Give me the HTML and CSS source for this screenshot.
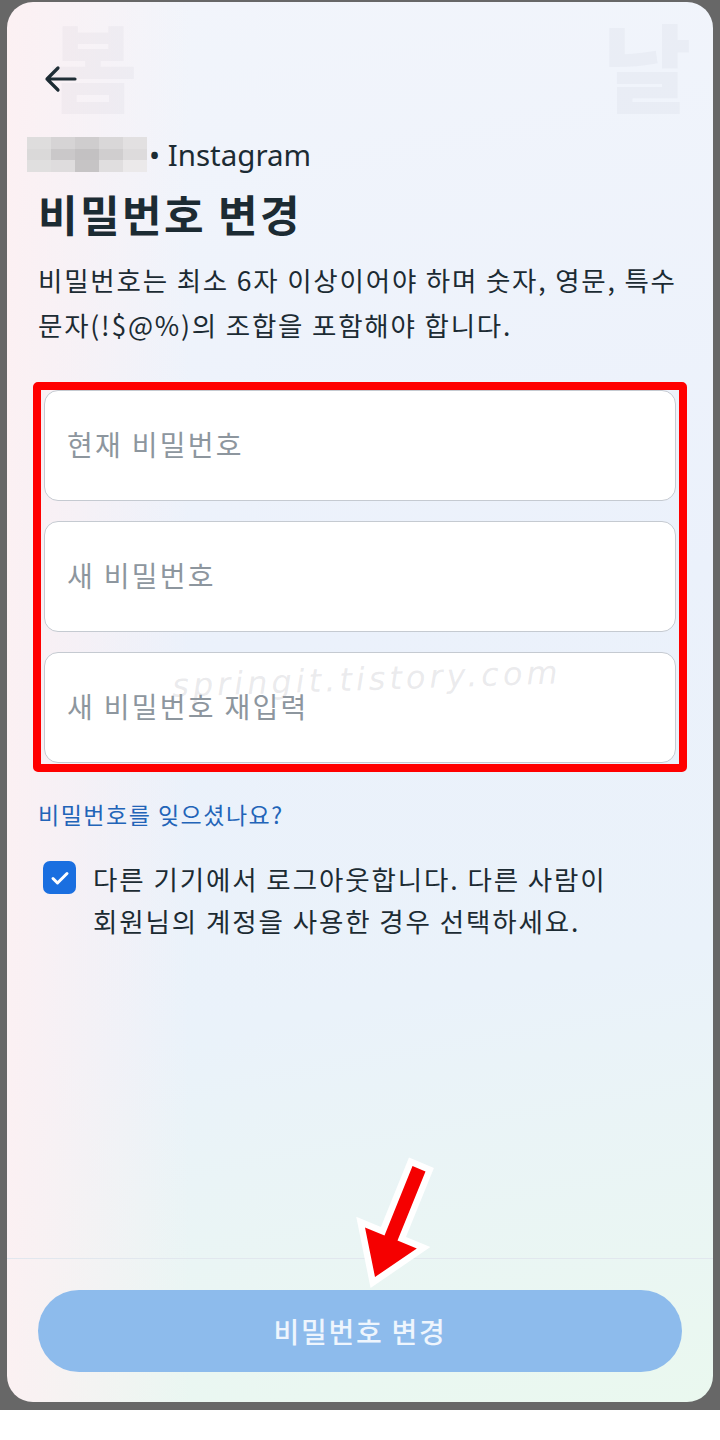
FILE: index.html
```html
<!DOCTYPE html>
<html>
<head>
    <title>비밀번호 변경</title>
    <link rel="stylesheet" href="styles.css">
</head>
<body>
    <div class="frame">
        <div class="screen">
            <div class="content">
                <button class="back" aria-label="뒤로">
                    <svg width="34" height="28" viewBox="0 0 34 28">
                        <path d="M32 14H4M15 3L4 14l11 11" fill="none" stroke="#1c2b33" stroke-width="3.2" stroke-linecap="round" stroke-linejoin="round"/>
                    </svg>
                </button>

                <div class="account">
                    <div class="blur">
                        <i style="background:#dedddd"></i><i style="background:#d6d4d5"></i><i style="background:#cfcdce"></i><i style="background:#d9d7d8"></i><i style="background:#e2e0e1"></i>
                        <i style="background:#dad9d9"></i><i style="background:#cac8c9"></i><i style="background:#c3c1c2"></i><i style="background:#d0cecf"></i><i style="background:#dddbdc"></i>
                        <i style="background:#e0dfdf"></i><i style="background:#dedcdd"></i><i style="background:#c6c4c5"></i><i style="background:#e0dedf"></i><i style="background:#ebe9ea"></i>
                    </div>
                    <span class="app">• Instagram</span>
                </div>

                <h1 class="title">비밀번호 변경</h1>
                <p class="desc">비밀번호는 최소 6자 이상이어야 하며 숫자, 영문, 특수<br>문자(!$@%)의 조합을 포함해야 합니다.</p>

                <div class="fields">
                    <input class="field" type="password" placeholder="현재 비밀번호">
                    <input class="field" type="password" placeholder="새 비밀번호">
                    <input class="field" type="password" placeholder="새 비밀번호 재입력">
                </div>

                <a class="forgot" href="#">비밀번호를 잊으셨나요?</a>

                <label class="logout">
                    <span class="checkbox">
                        <svg width="20" height="16" viewBox="0 0 20 16">
                            <path d="M3 8.5l4.5 4.5L17 3.5" fill="none" stroke="#fff" stroke-width="3" stroke-linecap="round" stroke-linejoin="round"/>
                        </svg>
                    </span>
                    <span class="logout-text">다른 기기에서 로그아웃합니다. 다른 사람이<br>회원님의 계정을 사용한 경우 선택하세요.</span>
                </label>
            </div>

            <div class="footer">
                <button class="submit">비밀번호 변경</button>
            </div>

            <!-- faint background watermarks -->
            <div class="ghost ghost-left">봄</div>
            <div class="ghost ghost-right">날</div>
            <div class="watermark">springit.tistory.com</div>
        </div>
    </div>

    <!-- annotation arrow -->
    <svg class="arrow" width="120" height="160" viewBox="340 1140 120 160">
        <polygon points="412.5,1166 425.5,1171.5 397.5,1240.5 416.8,1248.5 375,1277 365,1227.5 384.5,1235.5"
                 fill="#fff" stroke="#fff" stroke-width="13" stroke-linejoin="miter"/>
        <polygon points="412.5,1166 425.5,1171.5 397.5,1240.5 416.8,1248.5 375,1277 365,1227.5 384.5,1235.5"
                 fill="#f50000"/>
    </svg>
</body>
</html>
```

FILE: styles.css
```css
body {
    margin: 0;
    background: #fff;
    font-family: "Noto Sans CJK KR", "Noto Sans", sans-serif;
    color: #1c2b33;
    position: relative;
    height: 1440px;
    overflow: hidden;
}

.frame {
    background: #676767;
    padding: 2px 7px 8px;
}

.screen {
    position: relative;
    height: 1400px;
    border-radius: 26px;
    overflow: hidden;
    display: flex;
    flex-direction: column;
    background:
        linear-gradient(90deg, rgba(253, 240, 242, 0.9) 0%, rgba(253, 240, 242, 0) 26%),
        linear-gradient(170deg, #f2f5fb 0%, #ebf1fb 45%, #eaf2fa 70%, #eaf8ef 100%);
}

.ghost {
    position: absolute;
    top: 2px;
    font-size: 96px;
    font-weight: 900;
    line-height: 1.25;
    color: rgba(120, 120, 140, 0.05);
    pointer-events: none;
}

.ghost-left {
    left: 42px;
}

.ghost-right {
    right: 22px;
}

.content {
    flex: 1;
    padding: 0 31px;
}

.back {
    display: block;
    margin: 58px 0 0 2px;
    padding: 0;
    height: 40px;
    width: 40px;
    border: none;
    background: none;
}

.account {
    display: flex;
    align-items: center;
    height: 35px;
    margin: 37px 0 0 -11px;
}

.blur {
    display: grid;
    grid-template-columns: repeat(5, 24px);
    grid-template-rows: repeat(3, 11.7px);
    width: 120px;
}

.blur i {
    display: block;
}

.app {
    font-family: "Noto Sans", sans-serif;
    font-size: 29.5px;
    margin-left: 2px;
    color: #1c2b33;
}

.title {
    margin: 13px 0 0;
    font-size: 43px;
    line-height: 56px;
    font-weight: 700;
    letter-spacing: 2.4px;
}

.desc {
    margin: 16px 0 0;
    font-size: 26.5px;
    line-height: 45px;
    letter-spacing: 1.8px;
}

.fields {
    margin: 35px -5px 0 -5px;
    border: 8px solid #ff0000;
    border-radius: 5px;
    padding: 0 3px;
    display: flex;
    flex-direction: column;
    gap: 20px;
    box-sizing: border-box;
    height: 390px;
}

.field {
    height: 111px;
    box-sizing: border-box;
    border: 1.5px solid #c5cad1;
    border-radius: 14px;
    background: #fff;
    padding: 0 22px 4px;
    font-family: inherit;
    font-size: 28px;
    letter-spacing: 2.3px;
    color: #1c2b33;
    outline: none;
}

.field::placeholder {
    color: #8d969e;
}

.forgot {
    display: block;
    margin-top: 27px;
    font-size: 23px;
    line-height: 30px;
    color: #2264b8;
    text-decoration: none;
    letter-spacing: 1.5px;
}

.logout {
    display: flex;
    align-items: flex-start;
    gap: 17px;
    margin: 29px 0 0 5px;
}

.checkbox {
    flex: none;
    width: 33px;
    height: 33px;
    margin-top: 3px;
    border-radius: 7px;
    background: #1a6fe0;
    display: flex;
    align-items: center;
    justify-content: center;
}

.logout-text {
    font-size: 26.5px;
    line-height: 42px;
    letter-spacing: 1.9px;
}

.footer {
    border-top: 1px solid #e1e7ee;
    padding: 31px 31px 30px;
}

.submit {
    display: block;
    width: 100%;
    height: 82px;
    border: none;
    border-radius: 41px;
    background: #8dbbec;
    color: #eef5fd;
    font-family: inherit;
    font-size: 28px;
    font-weight: 500;
    letter-spacing: 1.7px;
}

.watermark {
    position: absolute;
    left: 165px;
    top: 658px;
    font-family: "DejaVu Sans", sans-serif;
    font-style: italic;
    font-weight: 300;
    font-size: 32px;
    letter-spacing: 4px;
    color: rgba(150, 150, 160, 0.2);
    transform: rotate(-2deg);
    pointer-events: none;
}

.arrow {
    position: absolute;
    left: 340px;
    top: 1140px;
}
```
